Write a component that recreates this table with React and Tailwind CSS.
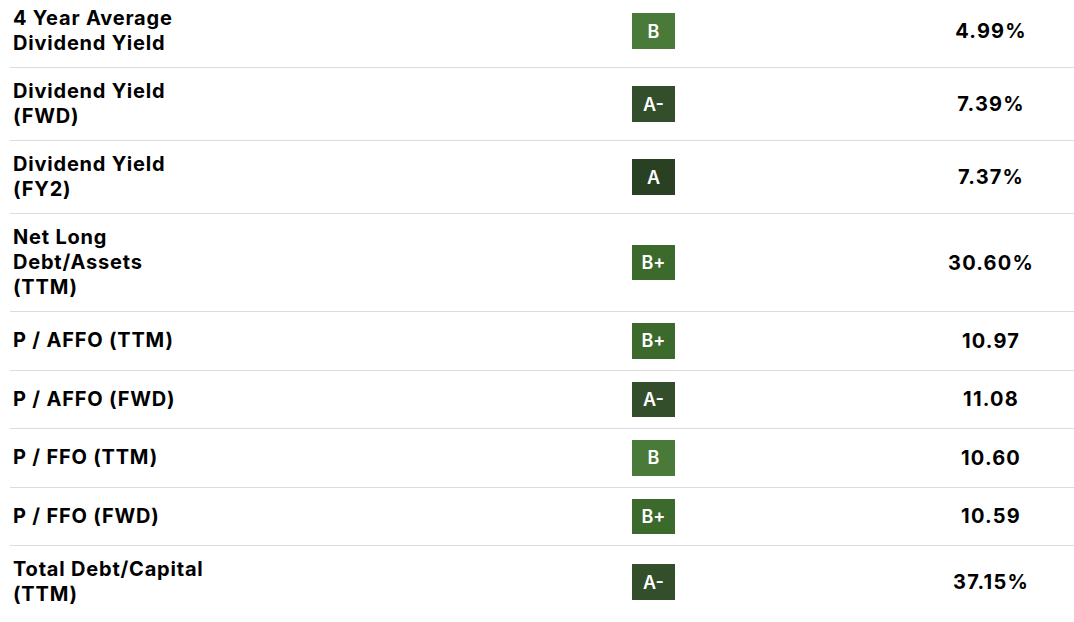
import React from "react";

const gradeColors = {
  "B": "bg-[#4a7a3a]",
  "B+": "bg-[#3c6a2d]",
  "A-": "bg-[#334e2a]",
  "A": "bg-[#294022]",
};

const rows = [
  { label: ["4 Year Average", "Dividend Yield"], grade: "B", value: "4.99%" },
  { label: ["Dividend Yield", "(FWD)"], grade: "A-", value: "7.39%" },
  { label: ["Dividend Yield", "(FY2)"], grade: "A", value: "7.37%" },
  { label: ["Net Long", "Debt/Assets", "(TTM)"], grade: "B+", value: "30.60%" },
  { label: ["P / AFFO (TTM)"], grade: "B+", value: "10.97" },
  { label: ["P / AFFO (FWD)"], grade: "A-", value: "11.08" },
  { label: ["P / FFO (TTM)"], grade: "B", value: "10.60" },
  { label: ["P / FFO (FWD)"], grade: "B+", value: "10.59" },
  { label: ["Total Debt/Capital", "(TTM)"], grade: "A-", value: "37.15%" },
];

export default function App() {
  return (
    <div
      className="w-[1074px] h-[622px] overflow-hidden bg-white text-black"
      style={{ fontFamily: "Inter, 'Liberation Sans', sans-serif" }}
    >
      <div className="-mt-[5px] pl-[10px]">
        {rows.map((r, i) => (
          <div
            key={i}
            className={`grid grid-cols-[389px_509px_1fr] items-center py-[11px] ${
              i < rows.length - 1 ? "border-b border-[#dcdcdc]" : ""
            }`}
          >
            <div className="pl-[3px] text-[20px] leading-[25px] font-bold tracking-[0.8px]">
              {r.label.map((l, j) => (
                <div key={j}>{l}</div>
              ))}
            </div>
            <div className="flex justify-center">
              <div
                className={`${gradeColors[r.grade]} w-[43px] h-[35.5px] flex items-center justify-center text-white text-[18px] font-semibold`}
              >
                {r.grade}
              </div>
            </div>
            <div className="text-center text-[20px] font-bold tracking-[1.2px]">{r.value}</div>
          </div>
        ))}
      </div>
    </div>
  );
}
